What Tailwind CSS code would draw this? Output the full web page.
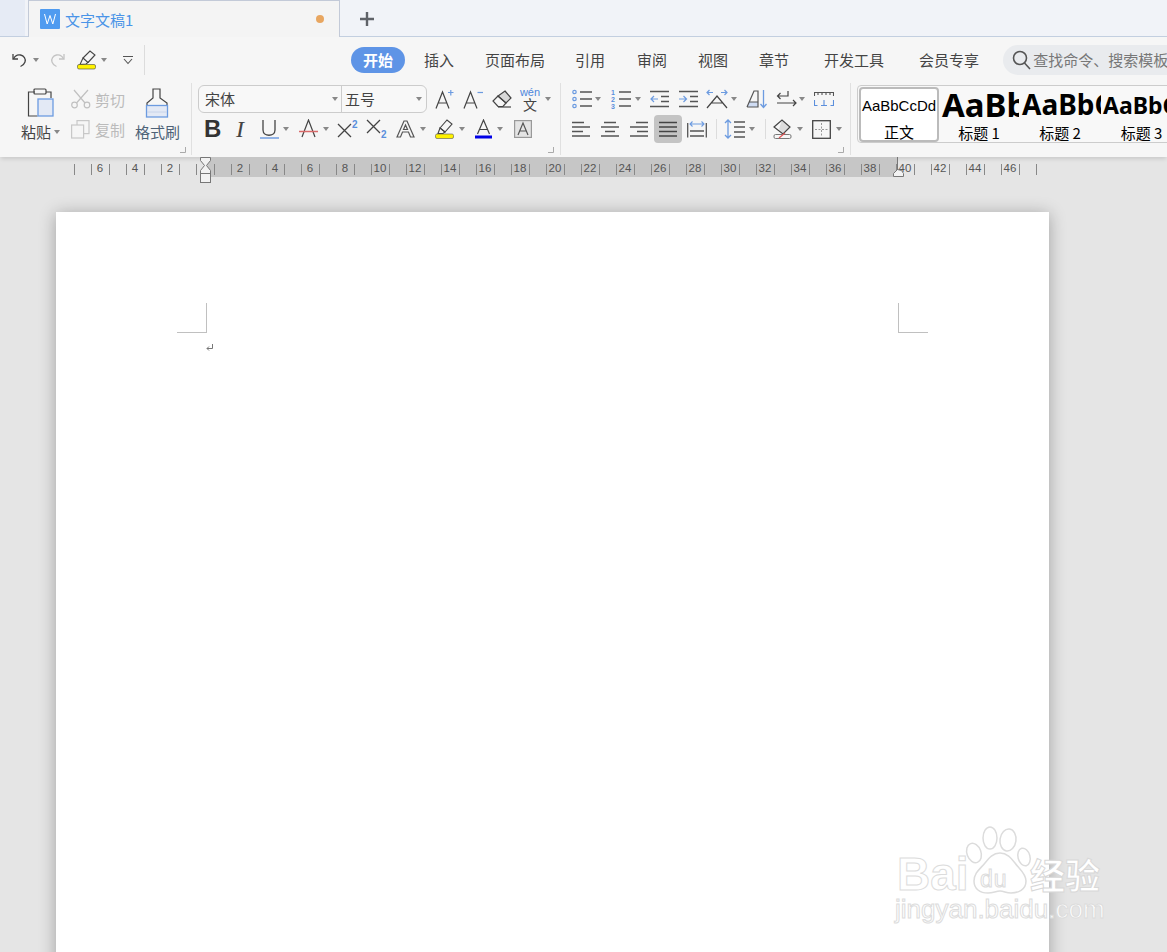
<!DOCTYPE html>
<html lang="zh-CN">
<head>
  <meta charset="UTF-8">
  <title>文字文稿1</title>
  <script src="https://cdn.jsdelivr.net/npm/@tailwindcss/browser@4"></script>
</head>
<body class="w-[1167px] h-[952px] overflow-hidden bg-[#e5e5e5] text-[#444] font-['Noto_Sans_CJK_SC',sans-serif]">

  <!-- tab bar -->
  <div class="flex h-[37px] bg-[#f1f3f8] border-b border-[#c3cfe0]">
    <div class="w-[25px] bg-[#e6ebf5]"></div>
    <div class="ml-[3px] w-[312px] h-[37px] flex items-center bg-[#f4f4f4] border-x border-t border-[#c3cad8] pl-[11px]">
      <div class="w-[20px] h-[20px] bg-[#4f9bf0] rounded-[1px] flex items-center justify-center">
        <svg width="14" height="12" viewBox="0 0 14 12" fill="none" stroke="#fff" stroke-width="1"><path d="M1.5 1l2.7 10L7 2.5 9.8 11l2.7-10"/></svg>
      </div>
      <span class="ml-[5px] text-[15px] leading-none text-[#4a94e8]">文字文稿1</span>
      <span class="ml-[183px] w-[8px] h-[8px] rounded-full bg-[#e8a660]"></span>
    </div>
    <svg class="ml-[19px] mt-[11px]" width="16" height="16" viewBox="0 0 16 16" fill="none" stroke="#5f6268" stroke-width="2.4"><path d="M8 1v14M1 8h14"/></svg>
  </div>

  <!-- menu row -->
  <div class="relative z-10 flex items-center h-[46px] bg-[#f6f6f6] overflow-hidden [&>*]:shrink-0">
    <svg class="ml-[12px]" width="15" height="16" viewBox="0 0 15 16" fill="none" stroke="#444" stroke-width="1.3"><path d="M1 2v5h5"/><path d="M1.5 7C3 3.5 6 2.5 8.5 3c3.5.8 5.5 4 4.500 7-.7 2-2.500 3.800-4.500 4.500"/></svg>
    <i class="ml-[6px] w-0 h-0 border-x-[3px] border-x-transparent border-t-[4px] border-t-[#888]"></i>
    <svg class="ml-[11px]" width="15" height="16" viewBox="0 0 15 16" fill="none" stroke="#c4c4c4" stroke-width="1.3"><path d="M14 2v5H9"/><path d="M13.500 7C12 3.500 9 2.500 6.500 3c-3.500.8-5.500 4-4.500 7 .7 2 2.500 3.800 4.500 4.500"/></svg>
    <svg class="ml-[12px]" width="20" height="20" viewBox="0 0 20 20" fill="none"><path d="M6 8l7-7 5 4-7 7.500" stroke="#444" stroke-width="1.100"/><path d="M6 8l5 4.500-2 1.500-6 .5z" stroke="#444" stroke-width="1.100"/><rect x=".5" y="14.500" width="18" height="4.500" rx="1.500" fill="#fff200" stroke="#444" stroke-width=".6"/></svg>
    <i class="ml-[4px] w-0 h-0 border-x-[3px] border-x-transparent border-t-[4px] border-t-[#888]"></i>
    <svg class="ml-[16px]" width="10" height="10" viewBox="0 0 10 10" fill="none" stroke="#555" stroke-width="1.100"><path d="M0 1.500h10M1 4l4 4.500L9 4"/></svg>
    <span class="ml-[11px] w-px h-[30px] bg-[#dcdcdc]"></span>

    <span class="ml-[206px] w-[54px] h-[26px] rounded-full bg-[#5e94e6] text-white text-[15px] font-bold flex items-center justify-center">开始</span>
    <div class="flex items-center mb-[2px] text-[15px] text-[#444] leading-none whitespace-nowrap">
      <span class="ml-[19px]">插入</span>
      <span class="ml-[31px]">页面布局</span>
      <span class="ml-[30px]">引用</span>
      <span class="ml-[32px]">审阅</span>
      <span class="ml-[31px]">视图</span>
      <span class="ml-[31px]">章节</span>
      <span class="ml-[35px]">开发工具</span>
      <span class="ml-[35px]">会员专享</span>
    </div>
    <div class="ml-[24px] w-[164px] h-[30px] rounded-l-full bg-[#e9ebee] flex items-center pl-[9px] overflow-hidden">
      <svg class="shrink-0" width="19" height="20" viewBox="0 0 19 20" fill="none" stroke="#555" stroke-width="1.600"><circle cx="8" cy="8" r="6.500"/><path d="M12.500 13l5.500 6"/></svg>
      <span class="ml-[2px] mb-[2px] text-[15px] leading-none text-[#777] whitespace-nowrap">查找命令、搜索模板</span>
    </div>
  </div>

  <!-- ribbon -->
  <div class="relative z-10 flex h-[74px] bg-[#f6f6f6] shadow-[0_3px_4px_-1px_rgba(0,0,0,0.12)] overflow-hidden">

    <!-- clipboard group -->
    <div class="relative flex w-[192px] h-[72px] border-r border-[#e0e0e0] shrink-0">
      <div class="ml-[21px] w-[50px] flex flex-col">
        <svg class="ml-[6px] mt-[5px]" width="28" height="30" viewBox="0 0 28 30" fill="none"><path d="M8 4H1.500v24h9" stroke="#444" stroke-width="1.200"/><path d="M19 4h5v6" stroke="#444" stroke-width="1.200"/><rect x="7" y="1" width="12" height="5" rx="1" stroke="#444" stroke-width="1.200"/><rect x="11" y="11" width="15" height="17" fill="#e3e9f5" stroke="#6c9be0" stroke-width="1.300"/></svg>
        <div class="flex items-center mt-[-1px]"><span class="text-[15px] leading-[30px] w-[33px]">粘贴</span><i class="w-0 h-0 border-x-[3px] border-x-transparent border-t-[4px] border-t-[#888]"></i></div>
      </div>
      <div class="w-[64px] flex flex-col text-[15px] text-[#bbb]">
        <div class="flex items-center h-[30px] mt-[1px]">
          <svg width="20" height="20" viewBox="0 0 20 20" fill="none" stroke="#c0c0c0" stroke-width="1.200"><circle cx="3.500" cy="16" r="2.800"/><circle cx="16" cy="16" r="2.800"/><path d="M5.500 14L17 1M14 14L3 1"/></svg>
          <span class="ml-[4px] leading-none">剪切</span>
        </div>
        <div class="flex items-center h-[30px]">
          <svg width="19" height="19" viewBox="0 0 19 19" fill="none" stroke="#c8c8c8" stroke-width="1.200"><rect x="6" y=".6" width="12" height="13"/><rect x=".6" y="5" width="12" height="13" fill="#f6f6f6"/></svg>
          <span class="ml-[5px] leading-none">复制</span>
        </div>
      </div>
      <div class="flex flex-col w-[45px]">
        <svg class="ml-[10px] mt-[5px]" width="24" height="30" viewBox="0 0 24 30" fill="none"><path d="M8 1h7v9l7 5v3H2v-3l6-5z" stroke="#444" stroke-width="1.200"/><rect x="1.500" y="17.500" width="21" height="11.500" fill="#e3e9f5" stroke="#6c9be0" stroke-width="1.300"/><path d="M2 24h20" stroke="#c8d4ea"/></svg>
        <span class="text-[15px] leading-[30px] mt-[-1px] whitespace-nowrap text-[#4d6277]">格式刷</span>
      </div>
      <svg class="absolute right-[5px] bottom-[2px]" width="6" height="6" viewBox="0 0 6 6" fill="none" stroke="#aaa"><path d="M5.500 0v5.500H0"/></svg>
    </div>

    <!-- font group -->
    <div class="relative flex flex-col w-[369px] h-[72px] border-r border-[#e0e0e0] shrink-0 pl-[6px] pt-[2px]">
      <div class="flex items-center h-[28px]">
        <div class="flex w-[229px] h-[28px] rounded-[6px] border border-[#ccc] bg-[#f8f8f8] text-[15px] leading-[26px]">
          <div class="w-[143px] pl-[6px] border-r border-[#ccc] flex items-center justify-between pr-[3px]">宋体<i class="w-0 h-0 border-x-[3px] border-x-transparent border-t-[4px] border-t-[#888]"></i></div>
          <div class="flex-1 pl-[3px] flex items-center justify-between pr-[4px]">五号<i class="w-0 h-0 border-x-[3px] border-x-transparent border-t-[4px] border-t-[#888]"></i></div>
        </div>
        <svg class="ml-[8px]" width="19" height="20" viewBox="0 0 19 20" fill="none" stroke="#444" stroke-width="1.200"><path d="M1 19.500L7.500 3l6.500 16.500M3.500 14h8"/><path d="M13 3.500h5.500M15.800 1v5.500" stroke="#6c9be0"/></svg>
        <svg class="ml-[9px]" width="21" height="20" viewBox="0 0 21 20" fill="none" stroke="#444" stroke-width="1.200"><path d="M1 19.500L7.500 3l6.500 16.500M3.500 14h8"/><path d="M14.500 3.500H20" stroke="#6c9be0"/></svg>
        <svg class="ml-[8px]" width="20" height="18" viewBox="0 0 20 18" fill="none" stroke="#444" stroke-width="1.200"><path d="M13 1l6 7-5 5-8-7z" fill="#d8d8d8"/><path d="M6 6L1 11l5 5.500h5l3-3.500z"/><path d="M6 17h13"/></svg>
        <div class="ml-[8px] w-[20px] flex flex-col items-center leading-none">
          <span class="text-[11px] leading-[10px] font-medium font-['Liberation_Sans',sans-serif] text-[#4d86dc]">wén</span>
          <span class="text-[14px] leading-[14px]">文</span>
        </div>
        <i class="ml-[5px] w-0 h-0 border-x-[3px] border-x-transparent border-t-[4px] border-t-[#888]"></i>
      </div>
      <div class="flex items-center h-[28px] mt-[2px]">
        <span class="ml-[6px] w-[16px] text-[24px] leading-none font-bold font-['Liberation_Sans',sans-serif] text-[#333]">B</span>
        <span class="ml-[13px] w-[14px] text-center text-[24px] leading-none italic font-['Liberation_Serif',serif] text-[#444]">I</span>
        <svg class="ml-[13px]" width="19" height="20" viewBox="0 0 19 20" fill="none"><path d="M3 1v10c0 7 12 7 12 0V1" stroke="#444" stroke-width="1.300"/><path d="M0 19h19" stroke="#5b8fdc" stroke-width="1.300"/></svg>
        <i class="ml-[4px] w-0 h-0 border-x-[3px] border-x-transparent border-t-[4px] border-t-[#888]"></i>
        <svg class="ml-[10px]" width="19" height="20" viewBox="0 0 19 20" fill="none"><path d="M3 18L9.500 1 16 18" stroke="#444" stroke-width="1.200"/><path d="M0 12.500h19" stroke="#d96a6a" stroke-width="1.500"/></svg>
        <i class="ml-[5px] w-0 h-0 border-x-[3px] border-x-transparent border-t-[4px] border-t-[#888]"></i>
        <svg class="ml-[8px]" width="21" height="18" viewBox="0 0 21 18" fill="none"><path d="M1 4l13 13M14 4L1 17" stroke="#444" stroke-width="1.300"/><text x="15" y="8" font-size="10" font-weight="bold" font-family="Liberation Sans" fill="#5b8fdc">2</text></svg>
        <svg class="ml-[8px]" width="21" height="20" viewBox="0 0 21 20" fill="none"><path d="M1 1l13 13M14 1L1 14" stroke="#444" stroke-width="1.300"/><text x="15" y="19" font-size="10" font-weight="bold" font-family="Liberation Sans" fill="#5b8fdc">2</text></svg>
        <svg class="ml-[9px]" width="19" height="20" viewBox="0 0 19 20" fill="none" stroke="#555" stroke-width="1.200"><path d="M1 18L8 2h3l7 16h-3.500l-2-5H6.500l-2 5zM7.500 10.500L9.500 6l2 4.500z"/></svg>
        <i class="ml-[5px] w-0 h-0 border-x-[3px] border-x-transparent border-t-[4px] border-t-[#888]"></i>
        <svg class="ml-[9px]" width="19" height="20" viewBox="0 0 19 20" fill="none"><path d="M5 9l7-8 5 4-7 8z" stroke="#444" stroke-width="1.100"/><path d="M5 9l5 4-2 1.500H3z" stroke="#444" stroke-width="1.100"/><rect x=".5" y="15" width="18" height="4.500" rx="1.500" fill="#fff200" stroke="#555" stroke-width=".6"/></svg>
        <i class="ml-[5px] w-0 h-0 border-x-[3px] border-x-transparent border-t-[4px] border-t-[#888]"></i>
        <svg class="ml-[10px]" width="17" height="20" viewBox="0 0 17 20" fill="none"><path d="M2.500 15L8.500 1l6 14M4.500 10.500h8" stroke="#444" stroke-width="1.200"/><rect y="16.500" width="17" height="3" fill="#0000e6"/></svg>
        <i class="ml-[5px] w-0 h-0 border-x-[3px] border-x-transparent border-t-[4px] border-t-[#888]"></i>
        <svg class="ml-[11px]" width="18" height="18" viewBox="0 0 18 18" fill="none"><rect x=".6" y=".6" width="16.800" height="16.800" fill="#e4e4e4" stroke="#999" stroke-width="1.200"/><path d="M4 15L9 3l5 12M5.500 11h7" stroke="#555" stroke-width="1.200"/></svg>
      </div>
      <svg class="absolute right-[6px] bottom-[2px]" width="6" height="6" viewBox="0 0 6 6" fill="none" stroke="#aaa"><path d="M5.500 0v5.500H0"/></svg>
    </div>

    <!-- paragraph group -->
    <div class="relative flex flex-col w-[290px] h-[72px] border-r border-[#e0e0e0] shrink-0 pt-[2px]">
      <div class="flex items-center h-[28px]">
        <svg class="ml-[11px]" width="20" height="20" viewBox="0 0 20 20" fill="none"><g stroke="#6c9be0" stroke-width="1.200"><circle cx="2.500" cy="3" r="1.700"/><circle cx="2.500" cy="10" r="1.700"/><circle cx="2.500" cy="17" r="1.700"/></g><path d="M8 3h12M8 10h12M8 17h12" stroke="#555" stroke-width="1.300"/></svg>
        <i class="ml-[3px] w-0 h-0 border-x-[3px] border-x-transparent border-t-[4px] border-t-[#888]"></i>
        <svg class="ml-[10px]" width="20" height="20" viewBox="0 0 20 20" fill="none"><path d="M8 3h12M8 10h12M8 17h12" stroke="#555" stroke-width="1.300"/><text x="0" y="6" font-size="7" font-family="Liberation Sans" font-weight="bold" fill="#5b8fdc">1</text><text x="0" y="13" font-size="7" font-family="Liberation Sans" font-weight="bold" fill="#5b8fdc">2</text><text x="0" y="20" font-size="7" font-family="Liberation Sans" font-weight="bold" fill="#5b8fdc">3</text></svg>
        <i class="ml-[4px] w-0 h-0 border-x-[3px] border-x-transparent border-t-[4px] border-t-[#888]"></i>
        <svg class="ml-[8px]" width="20" height="18" viewBox="0 0 20 18" fill="none"><path d="M1 1.500h19M12 6.500h8M12 11.500h8M1 16.500h19" stroke="#555" stroke-width="1.300"/><path d="M9 9H2M5 6L2 9l3 3" stroke="#6c9be0" stroke-width="1.200"/></svg>
        <svg class="ml-[9px]" width="20" height="18" viewBox="0 0 20 18" fill="none"><path d="M1 1.500h19M12 6.500h8M12 11.500h8M1 16.500h19" stroke="#555" stroke-width="1.300"/><path d="M1 9h7M5.500 6L8.500 9l-3 3" stroke="#6c9be0" stroke-width="1.200"/></svg>
        <svg class="ml-[8px]" width="22" height="20" viewBox="0 0 22 20" fill="none"><path d="M1 19L11 7l10 12M5 14h12" stroke="#444" stroke-width="1.200"/><path d="M1 3.500h6M3.500 1L1 3.500 3.500 6M15 3.500h6M18.500 1L21 3.500 18.500 6" stroke="#6c9be0" stroke-width="1.200"/></svg>
        <i class="ml-[3px] w-0 h-0 border-x-[3px] border-x-transparent border-t-[4px] border-t-[#888]"></i>
        <svg class="ml-[9px]" width="21" height="20" viewBox="0 0 21 20" fill="none"><path d="M3 13h9v5H1.500z" fill="#cfdcf3"/><path d="M1 18L8 2h4v16H1M3.500 13H12" stroke="#555" stroke-width="1.200"/><path d="M17.500 1v17M14.500 15l3 3.500 3-3.500" stroke="#6c9be0" stroke-width="1.300"/></svg>
        <svg class="ml-[9px]" width="21" height="18" viewBox="0 0 21 18" fill="none" stroke="#444" stroke-width="1.200"><path d="M12 1v5H1.500M4.500 3L1.500 6l3 3"/><path d="M1 13h19M17 10l3 3-3 3"/></svg>
        <i class="ml-[2px] w-0 h-0 border-x-[3px] border-x-transparent border-t-[4px] border-t-[#888]"></i>
        <svg class="ml-[9px]" width="20" height="16" viewBox="0 0 20 16" fill="none"><path d="M.5 5V1.500h19V5M4 1.500V4M8 1.500V4M12 1.500V4M16 1.500V4" stroke="#555" stroke-width="1.100"/><path d="M.5 9v5.500h3M19.500 9v5.500h-3M7 14.500h6M10 9v5" stroke="#5b8fdc" stroke-width="1.100"/></svg>
      </div>
      <div class="flex items-center h-[28px] mt-[2px]">
        <svg class="ml-[11px]" width="18" height="16" viewBox="0 0 18 16" fill="none" stroke="#555" stroke-width="1.300"><path d="M0 1.500h12M0 6h18M0 10.500h11M0 15h18"/></svg>
        <svg class="ml-[11px]" width="18" height="16" viewBox="0 0 18 16" fill="none" stroke="#555" stroke-width="1.300"><path d="M3 1.500h12M0 6h18M4 10.500h10M0 15h18"/></svg>
        <svg class="ml-[11px]" width="18" height="16" viewBox="0 0 18 16" fill="none" stroke="#555" stroke-width="1.300"><path d="M6 1.500h12M0 6h18M7 10.500h11M0 15h18"/></svg>
        <div class="ml-[6px] w-[28px] h-[28px] rounded-[4px] bg-[#c4c4c4] flex items-center justify-center">
          <svg width="18" height="16" viewBox="0 0 18 16" fill="none" stroke="#444" stroke-width="1.500"><path d="M0 1.500h18M0 6h18M0 10.500h18M0 15h18"/></svg>
        </div>
        <svg class="ml-[5px]" width="20" height="18" viewBox="0 0 20 18" fill="none"><path d="M.7 3v14.500M19.300 3v14.500M3 11h14M3 16h14" stroke="#555" stroke-width="1.300"/><path d="M3 4h14M5.500 1.500L3 4l2.500 2.500M14.500 1.500L17 4l-2.500 2.500" stroke="#6c9be0" stroke-width="1.100"/></svg>
        <span class="ml-[9px] w-px h-[20px] bg-[#dcdcdc]"></span>
        <svg class="ml-[7px]" width="21" height="20" viewBox="0 0 21 20" fill="none"><path d="M4 1v18M1 4l3-3 3 3M1 16l3 3 3-3" stroke="#6c9be0" stroke-width="1.300"/><path d="M10 3h11M10 8h11M10 13h11M10 18h11" stroke="#555" stroke-width="1.300"/></svg>
        <i class="ml-[4px] w-0 h-0 border-x-[3px] border-x-transparent border-t-[4px] border-t-[#888]"></i>
        <span class="ml-[10px] w-px h-[20px] bg-[#dcdcdc]"></span>
        <svg class="ml-[7px]" width="19" height="20" viewBox="0 0 19 20" fill="none"><path d="M9 1l8 7-7 7-4-5z" fill="#dcdcdc"/><path d="M1 8l8-7 8 7-7 7z" stroke="#444" stroke-width="1.200"/><rect x="1" y="15.500" width="17" height="4" rx="1.500" stroke="#777"/><path d="M6 19l6-5" stroke="#e05555" stroke-width="1.200"/></svg>
        <i class="ml-[5px] w-0 h-0 border-x-[3px] border-x-transparent border-t-[4px] border-t-[#888]"></i>
        <svg class="ml-[9px]" width="19" height="19" viewBox="0 0 19 19" fill="none"><rect x=".7" y=".7" width="17.600" height="17.600" stroke="#444" stroke-width="1.300"/><path d="M9.500 3v13M3 9.500h13" stroke="#999" stroke-dasharray="2 1.500"/></svg>
        <i class="ml-[5px] w-0 h-0 border-x-[3px] border-x-transparent border-t-[4px] border-t-[#888]"></i>
      </div>
      <svg class="absolute right-[6px] bottom-[2px]" width="6" height="6" viewBox="0 0 6 6" fill="none" stroke="#aaa"><path d="M5.500 0v5.500H0"/></svg>
    </div>

    <!-- style gallery -->
    <div class="ml-[6px] mt-[2px] flex h-[58px] w-[320px] shrink-0 border border-[#ccc] rounded-[4px] bg-[#f8f8f8] text-black">
      <div class="ml-px mt-px w-[80px] h-[55px] shrink-0 bg-white border-2 border-[#bbb] rounded-[4px] flex flex-col items-center overflow-hidden">
        <span class="text-[15px] leading-[33px] whitespace-nowrap font-['Liberation_Sans',sans-serif]">AaBbCcDd</span>
        <span class="text-[15px] leading-[19px]">正文</span>
      </div>
      <div class="w-[80px] shrink-0 flex flex-col items-center overflow-hidden">
        <span class="self-start pl-[3px] w-full h-[37px] overflow-hidden text-[33px] leading-[38px] font-bold whitespace-nowrap font-['Noto_Sans',sans-serif]">AaBbCc</span>
        <span class="text-[15px] leading-[19px] whitespace-nowrap">标题 1</span>
      </div>
      <div class="w-[82px] shrink-0 flex flex-col items-center overflow-hidden">
        <span class="self-start pl-[3px] w-full h-[37px] overflow-hidden text-[28px] leading-[36px] font-bold whitespace-nowrap font-['Noto_Sans',sans-serif]">AaBbCc</span>
        <span class="text-[15px] leading-[19px] whitespace-nowrap">标题 2</span>
      </div>
      <div class="w-[81px] shrink-0 flex flex-col items-center overflow-hidden">
        <span class="self-start pl-[2px] w-full h-[37px] overflow-hidden text-[23px] leading-[38px] font-bold whitespace-nowrap font-['Noto_Sans',sans-serif]">AaBbCc</span>
        <span class="text-[15px] leading-[19px] whitespace-nowrap">标题 3</span>
      </div>
    </div>
  </div>

  <!-- ruler -->
  <svg id="ruler" class="block overflow-visible relative z-10" width="1167" height="20" viewBox="0 0 1167 20"></svg>

  <!-- page area -->
  <div class="h-[775px] pt-[35px] pl-[56px] overflow-hidden relative">
    <div class="w-[993px] h-[800px] bg-white shadow-[0_2px_16px_rgba(0,0,0,0.3)] pt-[91px]">
      <div class="flex h-[30px]">
        <div class="ml-[121px] w-[30px] h-[30px] border-r border-b border-[#c0c0c0]"></div>
        <div class="ml-[691px] w-[30px] h-[30px] border-l border-b border-[#c0c0c0]"></div>
      </div>
      <svg class="ml-[150px] mt-[11px]" width="8" height="8" viewBox="0 0 8 8" fill="none" stroke="#777"><path d="M6.500 0v4.500H1M3 2.500L1 4.500l2 2"/></svg>
    </div>

    <!-- watermark -->
    <div class="absolute left-[895px] top-[649px] w-[215px] h-[105px] text-white">
      <svg class="absolute left-[65px] top-0" width="80" height="70" viewBox="0 0 80 70" fill="#fff" stroke="#dcdcdc" stroke-width="1.500">
        <ellipse cx="14" cy="27" rx="7" ry="10" transform="rotate(-20 14 27)"/>
        <ellipse cx="30" cy="12" rx="7" ry="11"/>
        <ellipse cx="48" cy="14" rx="8" ry="11" transform="rotate(8 48 14)"/>
        <ellipse cx="64" cy="31" rx="6" ry="9" transform="rotate(-15 64 31)"/>
        <path d="M40 27c7 0 11 5 15 10 4 6 11 10 11 18 0 9-8 12-15 12-5 0-7-2-11-2s-7 2-12 2c-8 0-14-4-14-12s6-12 11-18c4-5 8-10 15-10z"/>
      </svg>
      <span class="absolute left-[85px] top-[42px] text-[23px] leading-none tracking-[1px] font-['Liberation_Sans',sans-serif] [-webkit-text-stroke:1px_#dcdcdc]">du</span>
      <span class="absolute left-[2px] top-[25px] text-[46px] leading-none font-bold font-['Liberation_Sans',sans-serif] [-webkit-text-stroke:1px_#dcdcdc]">Bai</span>
      <span class="absolute left-[135px] top-[30px] text-[35px] leading-none font-bold whitespace-nowrap [-webkit-text-stroke:1px_#d8d8d8]">经验</span>
      <span class="absolute left-0 top-[70px] text-[26px] leading-none whitespace-nowrap font-['Liberation_Sans',sans-serif] [-webkit-text-stroke:1px_#dcdcdc]">jingyan.baidu.com</span>
    </div>
  </div>

  <script>
    // ruler ticks and numbers, 0 sits at x=205 and one unit is 17.5px
    const unit = 17.5, zero = 205;
    let out = '<rect x="205" y="0" width="692" height="20" fill="#c6c6c6"/>';
    for (let n = -8; n <= 47; n++) {
      const x = zero + (n + 0.5) * unit;
      if (x > 70 && x < 1040) out += `<path d="M${Math.round(x) + 0.5} 7v11" stroke="#888"/>`;
      if (n !== 0 && n % 2 === 0 && n >= -6 && n <= 46) {
        out += `<text x="${zero + n * unit}" y="15" text-anchor="middle" font-size="11.500" font-family="Liberation Sans" fill="#555">${Math.abs(n)}</text>`;
      }
    }
    // indent markers
    out += '<path d="M200.500 .5h10v3l-4 5 4 5v3h-10v-3l4-5-4-5z" fill="#f2f2f2" stroke="#777"/>';
    out += '<rect x="200.500" y="16.500" width="10" height="9" fill="#f2f2f2" stroke="#777"/>';
    out += '<path d="M893.500 19.500v-3l4-4 4 1 2 3v3z" fill="#f2f2f2" stroke="#777"/><path d="M897.500 0v13" stroke="#777"/>';
    document.getElementById('ruler').innerHTML = out;
  </script>
</body>
</html>
